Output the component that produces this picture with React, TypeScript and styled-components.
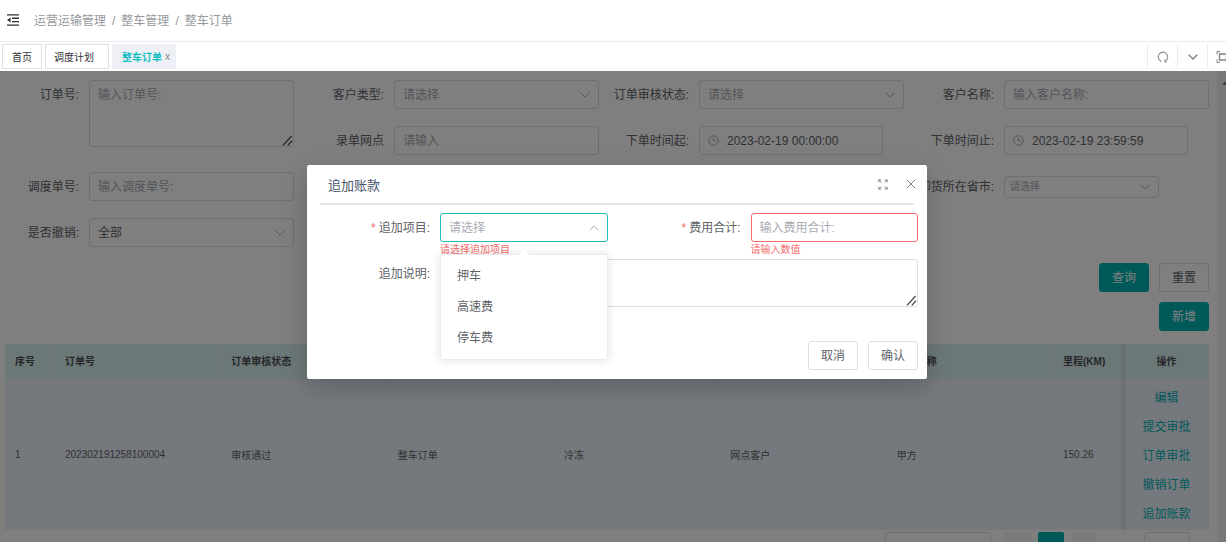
import React from 'react';
import styled, { createGlobalStyle, css } from 'styled-components';

const PRIMARY = '#00b3b3';
const DANGER = '#f56c6c';
const BORDER = '#dcdfe6';
const TEXT = '#606266';
const MUTED = '#a8abb2';
const FONT = '"Liberation Sans", "Noto Sans CJK SC", sans-serif';

const GlobalStyle = createGlobalStyle`
  *, *::before, *::after { box-sizing: border-box; }
  body {
    margin: 0;
    background: #fff;
    color: ${TEXT};
    font-family: ${FONT};
    font-size: 12px;
    overflow: hidden;
  }
  button, input, select, textarea { font-family: ${FONT}; font-size: 12px; color: ${TEXT}; }
  ::placeholder { color: ${MUTED}; opacity: 1; }
`;

const Page = styled.div`
  display: flex;
  flex-direction: column;
  height: 100vh;
  overflow: hidden;
`;

/* ---------- top bar ---------- */

const TopBar = styled.header`
  display: flex;
  align-items: center;
  flex: none;
  gap: 14px;
  height: 42px;
  padding: 0 6px 2px;
  border-bottom: 1px solid #ebecef;
`;

const IconButton = styled.button`
  display: inline-flex;
  align-items: center;
  justify-content: center;
  padding: 0;
  border: 0;
  background: none;
  cursor: pointer;
`;

const Crumbs = styled.nav`
  display: flex;
  align-items: baseline;
  gap: 6px;
  color: #909399;
`;

const Crumb = styled.a`
  color: #97999c;
  text-decoration: none;
`;

/* ---------- tabs ---------- */

const TabBar = styled.div`
  display: flex;
  flex: none;
  justify-content: space-between;
  height: 29px;
  padding: 2px 0 2px 2px;
  overflow: hidden;
`;

const TabList = styled.nav`
  display: flex;
  gap: 3px;
`;

const Tab = styled.button<{ $active?: boolean; $wide?: boolean }>`
  display: flex;
  align-items: center;
  gap: 3px;
  padding: 0 ${p => (p.$wide ? 14 : 9)}px 0 ${p => (p.$wide ? 8 : 9)}px;
  border: 1px solid ${p => (p.$active ? '#eff0f6' : '#dfe0e4')};
  background: ${p => (p.$active ? '#eff0f6' : '#fff')};
  color: ${p => (p.$active ? '#13bfc0' : '#303133')};
  font-size: 10px;
  font-weight: ${p => (p.$active ? 700 : 400)};
  cursor: pointer;
  ${p => p.$active && css`padding-right: 5px;`}
`;

const TabClose = styled.span`
  color: #808389;
  font-weight: 400;
`;

const TabTools = styled.div`
  display: flex;
  flex: none;
  margin-right: -11px;
`;

const Tool = styled(IconButton)`
  width: 30px;
  border-left: 1px solid #ebecef;
`;

/* ---------- content ---------- */

const Main = styled.main`
  position: relative;
  display: flex;
  flex: 1;
  min-height: 0;
  overflow: hidden;
`;

const Content = styled.div`
  flex: 1;
  min-width: 0;
  padding: 9px 8px 0 5px;
`;

const ScrollTrack = styled.div`
  display: flex;
  flex: none;
  justify-content: flex-end;
  width: 9px;
  padding-top: 8px;
  overflow: hidden;
  background: #f1f1f1;
`;

const SearchGrid = styled.form`
  display: grid;
  grid-template-columns: repeat(4, minmax(0, 1fr));
  grid-auto-rows: 29px;
  gap: 17px 16px;
`;

const Field = styled.div<{ $rows?: number; $col?: number }>`
  display: flex;
  align-items: ${p => (p.$rows ? 'flex-start' : 'center')};
  ${p => p.$rows && css`grid-row: span ${p.$rows};`}
  ${p => p.$col && css`grid-column: ${p.$col};`}
`;

const Label = styled.label<{ $w?: number; $required?: boolean }>`
  display: flex;
  flex: none;
  align-self: flex-start;
  justify-content: flex-end;
  width: ${p => p.$w ?? 84}px;
  padding-right: 10px;
  line-height: 31px;
  white-space: nowrap;
  ${p =>
    p.$required &&
    css`
      &::before {
        content: '*';
        margin-right: 3px;
        color: ${DANGER};
      }
    `}
`;

type BoxProps = { $state?: 'focus' | 'error'; $small?: boolean; $icon?: boolean };

const box = css<BoxProps>`
  width: 100%;
  height: ${p => (p.$small ? 22 : 29)}px;
  padding: 0 ${p => (p.$small ? 5 : 8)}px;
  border: 1px solid ${p => (p.$state === 'focus' ? '#20bcbc' : p.$state === 'error' ? DANGER : BORDER)};
  border-radius: 3px;
  background: #fff;
  outline: none;
  ${p => p.$icon && css`padding-left: 27px;`}
`;

const Input = styled.input<BoxProps>`${box}`;

const Select = styled.select<BoxProps & { $filled?: boolean }>`
  ${box}
  appearance: none;
  color: ${p => (p.$filled ? TEXT : MUTED)};
  ${p => p.$small && css`font-size: 10px;`}
`;

const TextArea = styled.textarea<{ $h: number }>`
  display: block;
  width: 100%;
  height: ${p => p.$h}px;
  padding: 6px 8px;
  border: 1px solid ${BORDER};
  border-radius: 3px;
  background: #fff;
  line-height: 16px;
  outline: none;
  resize: vertical;
`;

const Control = styled.div<{ $max?: number }>`
  position: relative;
  flex: 1;
  min-width: 0;
  max-width: ${p => (p.$max ? `${p.$max}px` : 'none')};
`;

const Adornment = styled.span<{ $side: 'left' | 'right' }>`
  position: absolute;
  top: 0;
  bottom: 0;
  ${p => p.$side}: 9px;
  display: flex;
  align-items: center;
  pointer-events: none;
`;

const Grip = styled.span`
  position: absolute;
  right: 1px;
  bottom: 1px;
  display: flex;
  background: #fff;
  pointer-events: none;
`;

const Actions = styled.div<{ $top: number }>`
  display: flex;
  justify-content: flex-end;
  gap: 10px;
  margin-top: ${p => p.$top}px;
`;

const Button = styled.button<{ $primary?: boolean }>`
  min-width: 50px;
  height: 29px;
  padding: 0 12px 2px;
  border: 1px solid ${p => (p.$primary ? PRIMARY : BORDER)};
  border-radius: 3px;
  background: ${p => (p.$primary ? PRIMARY : '#fff')};
  color: ${p => (p.$primary ? '#fff' : TEXT)};
  cursor: pointer;
`;

const Table = styled.table`
  width: 100%;
  margin-top: 13px;
  border-spacing: 0;
  table-layout: fixed;
  font-size: 10px;
`;

const pinned = css`
  position: relative;
  padding-left: 0;
  padding-right: 0;
  text-align: center;

  &::before {
    content: '';
    position: absolute;
    top: 0;
    bottom: 0;
    left: -6px;
    width: 6px;
    background: linear-gradient(to right, rgba(0, 0, 0, 0), rgba(0, 0, 0, 0.1));
  }
`;

const HeadCell = styled.th<{ $pinned?: boolean }>`
  height: 35px;
  padding: 0 10px 3px;
  border-right: 1px solid #dcf0f0;
  background: #d8eeee;
  color: #4c4f55;
  text-align: left;
  white-space: nowrap;
  ${p => p.$pinned && pinned}
`;

const Cell = styled.td<{ $pinned?: boolean }>`
  height: 151px;
  padding: 0 10px;
  border-right: 1px solid #e8eef8;
  background: #ebf2fd;
  ${p => p.$pinned && css`${pinned} padding-top: 3px;`}
`;

const RowLink = styled.a`
  display: block;
  color: ${PRIMARY};
  font-size: 12px;
  line-height: 29px;
  text-decoration: none;
`;

const Pager = styled.div`
  display: flex;
  justify-content: flex-end;
  gap: 7px;
  padding: 2px 19px 0 0;
`;

const PageSize = styled(Select)`
  width: 106px;
  height: 23px;
  margin-right: 7px;
`;

const PageButton = styled.button<{ $active?: boolean }>`
  width: 26px;
  height: 23px;
  border: 0;
  border-radius: 2px;
  background: ${p => (p.$active ? PRIMARY : '#f4f4f5')};
`;

const PageJump = styled(Input)`
  width: 46px;
  height: 23px;
  margin-left: 40px;
`;

/* ---------- dialog ---------- */

const Overlay = styled.div`
  position: absolute;
  inset: 0;
  display: flex;
  align-items: flex-start;
  justify-content: center;
  padding: 94px 0 0 8px;
  background: rgba(0, 0, 0, 0.5);
`;

const Dialog = styled.section`
  width: 620px;
  max-width: 100%;
  padding-bottom: 9px;
  border-radius: 2px;
  background: #fff;
  box-shadow: 0 8px 24px rgba(0, 0, 0, 0.2);
`;

const DialogHeader = styled.header`
  display: flex;
  align-items: center;
  justify-content: space-between;
  height: 40px;
  margin: 0 13px;
  padding: 0 0 0 8px;
  border-bottom: 2px solid #e6e6e6;
`;

const DialogTitle = styled.h2`
  margin: 0;
  color: #44546a;
  font-size: 13px;
  font-weight: 400;
`;

const DialogTools = styled.div`
  display: flex;
  gap: 18px;
  margin-right: -2px;
`;

const DialogForm = styled.form`
  display: grid;
  grid-template-columns: repeat(2, minmax(0, 1fr));
  column-gap: 18px;
  padding: 8px 9px 0 8px;
`;

const DialogField = styled.div<{ $full?: boolean }>`
  display: flex;
  align-items: flex-start;
  ${p => p.$full && css`grid-column: 1 / -1;`}
`;

const ErrorText = styled.div`
  height: 17px;
  color: ${DANGER};
  font-size: 10px;
  line-height: 16px;
`;

const Dropdown = styled.ul`
  position: absolute;
  top: 41px;
  left: 0;
  z-index: 1;
  width: 100%;
  margin: 0;
  padding: 6px 0 5px;
  border: 1px solid #e9ebf0;
  border-radius: 3px;
  background: #fff;
  box-shadow: 0 0 10px rgba(0, 0, 0, 0.12);
  list-style: none;

  &::before {
    content: '';
    position: absolute;
    top: -4px;
    left: 50%;
    width: 8px;
    height: 8px;
    margin-left: -4px;
    background: #fff;
    transform: rotate(45deg);
  }
`;

const Option = styled.li`
  padding: 0 16px;
  line-height: 31px;
`;

const DialogActions = styled(Actions)`
  padding: 0 9px;
`;

/* ---------- icons ---------- */

const Chevron = ({ up, size = 10, color = MUTED, width = 1 }: { up?: boolean; size?: number; color?: string; width?: number }) => (
  <svg width={size} height={size} viewBox="0 0 10 10" fill="none" stroke={color} strokeWidth={width}>
    <path d={up ? 'M0.7 7.2 5 2.9 9.3 7.2' : 'M0.7 2.8 5 7.1 9.3 2.8'} />
  </svg>
);

const FoldIcon = () => (
  <svg width="14" height="14" viewBox="0 0 14 14" fill="#303133">
    <path d="M1 1.3h12v1.3H1zM6 4.6h7v1.3H6zM6 8h7v1.3H6zM1 11.4h12v1.3H1zM1 7l3.6-2.6v5.2z" />
  </svg>
);

const ReloadIcon = () => (
  <svg width="12" height="12" viewBox="0 0 12 12" fill="none" stroke="#8c8f94" strokeWidth="1.1">
    <path d="M3.8 11V10A4.7 4.7 0 1 1 8.4 9.9" />
    <path d="M7.9 8.6v2.4h2.2" />
  </svg>
);

const FrameIcon = () => (
  <svg width="14" height="12" viewBox="0 0 14 12" fill="none" stroke="#808389">
    <path d="M1 3.5V.6h3M10 .6h3v2.9M13 8.5v2.9h-3M4 11.4H1V8.5" />
    <path d="M3.5 3h7v6h-7z" strokeWidth="1.4" />
  </svg>
);

const ClockIcon = () => (
  <svg width="11" height="11" viewBox="0 0 11 11" fill="none" stroke={MUTED}>
    <circle cx="5.5" cy="5.5" r="4.7" />
    <path d="M5.5 2.8v3h2.3" />
  </svg>
);

const ExpandIcon = () => (
  <svg width="10" height="11" viewBox="0 0 10 11" fill="none" stroke="#808389">
    <path d="M3.2.9H.8v2.4M.8.9l2.6 2.6M6.8.9h2.4v2.4M9.2.9 6.6 3.5M3.2 10.1H.8V7.7M.8 10.1l2.6-2.6M6.8 10.1h2.4V7.7M9.2 10.1 6.6 7.5" />
  </svg>
);

const CloseIcon = () => (
  <svg width="10" height="10" viewBox="0 0 10 10" fill="none" stroke="#808389">
    <path d="M.8.8l8.4 8.4M9.2.8.8 9.2" />
  </svg>
);

const GripIcon = () => (
  <svg width="11" height="11" viewBox="0 0 11 11" fill="none" stroke="#48494c" strokeWidth="1.3">
    <path d="M1 10.4 9.6 1M5.8 10.4 10 5.8" />
  </svg>
);

/* ---------- composed fields ---------- */

type SelectFieldProps = { id: string; label: string; value?: string; small?: boolean; col?: number; max?: number };

const SelectField = ({ id, label, value, small, col, max }: SelectFieldProps) => (
  <Field $col={col}>
    <Label htmlFor={id}>{label}</Label>
    <Control $max={max}>
      <Select id={id} $small={small} $filled={!!value}>
        <option>{value ?? '请选择'}</option>
      </Select>
      <Adornment $side="right"><Chevron /></Adornment>
    </Control>
  </Field>
);

const TextField = ({ id, label, hint }: { id: string; label: string; hint: string }) => (
  <Field>
    <Label htmlFor={id}>{label}</Label>
    <Control><Input id={id} placeholder={hint} /></Control>
  </Field>
);

const DateField = ({ id, label, value }: { id: string; label: string; value: string }) => (
  <Field>
    <Label htmlFor={id}>{label}</Label>
    <Control $max={184}>
      <Input id={id} $icon defaultValue={value} />
      <Adornment $side="left"><ClockIcon /></Adornment>
    </Control>
  </Field>
);

const NoteBox = ({ id, height, hint }: { id: string; height: number; hint?: string }) => (
  <Control>
    <TextArea id={id} $h={height} placeholder={hint} />
    <Grip><GripIcon /></Grip>
  </Control>
);

const COLUMNS = ['序号', '订单号', '订单审核状态', '业务类型', '货物类型', '客户类型', '客户名称', '里程(KM)'];
const ROW = ['1', '202302191258100004', '审核通过', '整车订单', '冷冻', '网点客户', '甲方', '150.26'];
const ROW_ACTIONS = ['编辑', '提交审批', '订单审批', '撤销订单', '追加账款'];
const CHARGE_ITEMS = ['押车', '高速费', '停车费'];

export default function App() {
  return (
    <Page>
      <GlobalStyle />
      <TopBar>
        <IconButton aria-label="收起菜单"><FoldIcon /></IconButton>
        <Crumbs>
          <Crumb href="#">运营运输管理</Crumb>
          <span>/</span>
          <Crumb href="#">整车管理</Crumb>
          <span>/</span>
          <Crumb href="#">整车订单</Crumb>
        </Crumbs>
      </TopBar>

      <TabBar>
        <TabList>
          <Tab>首页</Tab>
          <Tab $wide>调度计划</Tab>
          <Tab $active>整车订单<TabClose>x</TabClose></Tab>
        </TabList>
        <TabTools>
          <Tool aria-label="刷新"><ReloadIcon /></Tool>
          <Tool aria-label="更多"><Chevron color="#808389" width={1.4} /></Tool>
          <Tool aria-label="全屏"><FrameIcon /></Tool>
        </TabTools>
      </TabBar>

      <Main>
        <Content>
          <SearchGrid>
            <Field $rows={2}>
              <Label htmlFor="orderNo">订单号:</Label>
              <NoteBox id="orderNo" height={67} hint="输入订单号:" />
            </Field>
            <SelectField id="customerType" label="客户类型:" />
            <SelectField id="auditState" label="订单审核状态:" />
            <TextField id="customerName" label="客户名称:" hint="输入客户名称:" />
            <TextField id="branch" label="录单网点" hint="请输入" />
            <DateField id="from" label="下单时间起:" value="2023-02-19 00:00:00" />
            <DateField id="to" label="下单时间止:" value="2023-02-19 23:59:59" />
            <TextField id="dispatchNo" label="调度单号:" hint="输入调度单号:" />
            <SelectField id="province" label="卸货所在省市:" small col={4} max={155} />
            <SelectField id="revoked" label="是否撤销:" value="全部" />
          </SearchGrid>
          <Actions $top={16}>
            <Button $primary>查询</Button>
            <Button>重置</Button>
          </Actions>
          <Actions $top={10}>
            <Button $primary>新增</Button>
          </Actions>

          <Table>
            <colgroup>
              <col width="50" />
              <col span={6} />
              <col width="72" />
              <col width="84" />
            </colgroup>
            <thead>
              <tr>
                {COLUMNS.map(name => <HeadCell key={name}>{name}</HeadCell>)}
                <HeadCell $pinned>操作</HeadCell>
              </tr>
            </thead>
            <tbody>
              <tr>
                {ROW.map(value => <Cell key={value}>{value}</Cell>)}
                <Cell $pinned>
                  {ROW_ACTIONS.map(action => <RowLink key={action} href="#">{action}</RowLink>)}
                </Cell>
              </tr>
            </tbody>
          </Table>
          <Pager>
            <PageSize aria-label="每页条数" />
            <PageButton aria-label="上一页" />
            <PageButton $active aria-label="第一页" />
            <PageButton aria-label="下一页" />
            <PageJump aria-label="跳转页码" />
          </Pager>
        </Content>
        <ScrollTrack>
          <svg width="4" height="8" viewBox="0 0 4 8" fill="#808080"><path d="M0 6 4 2v4z" /></svg>
        </ScrollTrack>

        <Overlay>
          <Dialog role="dialog" aria-labelledby="dialogTitle">
            <DialogHeader>
              <DialogTitle id="dialogTitle">追加账款</DialogTitle>
              <DialogTools>
                <IconButton aria-label="放大"><ExpandIcon /></IconButton>
                <IconButton aria-label="关闭"><CloseIcon /></IconButton>
              </DialogTools>
            </DialogHeader>
            <DialogForm>
              <DialogField>
                <Label $w={125} $required htmlFor="chargeItem">追加项目:</Label>
                <Control>
                  <Control>
                    <Select id="chargeItem" $state="focus"><option>请选择</option></Select>
                    <Adornment $side="right"><Chevron up /></Adornment>
                    <Dropdown role="listbox" aria-label="追加项目">
                      {CHARGE_ITEMS.map(item => <Option key={item} role="option">{item}</Option>)}
                    </Dropdown>
                  </Control>
                  <ErrorText>请选择追加项目</ErrorText>
                </Control>
              </DialogField>
              <DialogField>
                <Label $w={125} $required htmlFor="total">费用合计:</Label>
                <Control>
                  <Input id="total" $state="error" placeholder="输入费用合计:" />
                  <ErrorText>请输入数值</ErrorText>
                </Control>
              </DialogField>
              <DialogField $full>
                <Label $w={125} htmlFor="remark">追加说明:</Label>
                <NoteBox id="remark" height={48} />
              </DialogField>
            </DialogForm>
            <DialogActions $top={34}>
              <Button>取消</Button>
              <Button>确认</Button>
            </DialogActions>
          </Dialog>
        </Overlay>
      </Main>
    </Page>
  );
}
